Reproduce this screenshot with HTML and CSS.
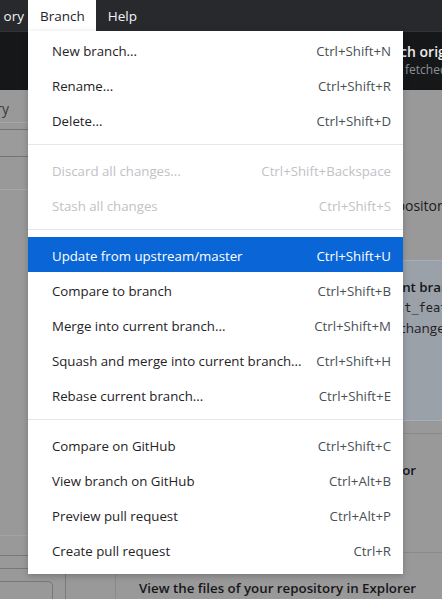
FILE: index.html
```html
<!DOCTYPE html>
<html lang="en">
<head>
<meta charset="utf-8">
<title>Branch menu</title>
<link rel="stylesheet" href="styles.css">
</head>
<body>
<div class="app">
  <div class="menubar">
    <span class="mb-item mb-cut">ory</span>
    <span class="mb-item mb-open">Branch</span>
    <span class="mb-item">Help</span>
  </div>
  <div class="toolbar">
    <div class="tb-seg tb-repo"></div>
    <div class="tb-seg tb-branch"></div>
    <div class="tb-seg tb-fetch">
      <div class="tb-title">Fetch origin</div>
      <div class="tb-sub">Last fetched just now</div>
    </div>
  </div>
  <div class="main">
    <aside class="sidebar">
      <div class="tabs"><span class="tab">History</span></div>
      <div class="filter"><div class="filter-input"></div></div>
      <div class="list"></div>
      <div class="commit">
        <div class="commit-row"></div>
        <div class="summary"></div>
      </div>
    </aside>
    <section class="content">
      <p class="blank-text">No local changes in this repository</p>
      <div class="callout">
        <div class="action-title">Create a Pull Request from your current branch</div>
        <div class="callout-desc">The current branch (<code>bugfix/login_test_feature</code>) is already published to GitHub.</div>
        <div class="callout-desc">Create a pull request to propose your changes.</div>
      </div>
      <div class="actions">
        <div class="action action-editor">
          <div class="action-title">Open the repository in your external editor</div>
        </div>
        <div class="action action-files">
          <div class="action-title">View the files of your repository in Explorer</div>
        </div>
      </div>
    </section>
  </div>
</div>

<div class="menu">
  <div class="mi"><span>New branch...</span><span class="sc">Ctrl+Shift+N</span></div>
  <div class="mi"><span>Rename...</span><span class="sc">Ctrl+Shift+R</span></div>
  <div class="mi"><span>Delete...</span><span class="sc">Ctrl+Shift+D</span></div>
  <div class="sep"></div>
  <div class="mi dis"><span>Discard all changes...</span><span class="sc">Ctrl+Shift+Backspace</span></div>
  <div class="mi dis"><span>Stash all changes</span><span class="sc">Ctrl+Shift+S</span></div>
  <div class="sep"></div>
  <div class="mi hl"><span>Update from upstream/master</span><span class="sc">Ctrl+Shift+U</span></div>
  <div class="mi"><span>Compare to branch</span><span class="sc">Ctrl+Shift+B</span></div>
  <div class="mi"><span>Merge into current branch...</span><span class="sc">Ctrl+Shift+M</span></div>
  <div class="mi"><span>Squash and merge into current branch...</span><span class="sc">Ctrl+Shift+H</span></div>
  <div class="mi"><span>Rebase current branch...</span><span class="sc">Ctrl+Shift+E</span></div>
  <div class="sep"></div>
  <div class="mi"><span>Compare on GitHub</span><span class="sc">Ctrl+Shift+C</span></div>
  <div class="mi"><span>View branch on GitHub</span><span class="sc">Ctrl+Alt+B</span></div>
  <div class="mi"><span>Preview pull request</span><span class="sc">Ctrl+Alt+P</span></div>
  <div class="mi"><span>Create pull request</span><span class="sc">Ctrl+R</span></div>
</div>
</body>
</html>
```

FILE: styles.css
```css
* { box-sizing: border-box; margin: 0; padding: 0; }

html, body {
  width: 442px;
  height: 599px;
  overflow: hidden;
}

body {
  position: relative;
  font-family: "Open Sans", "Noto Sans", sans-serif;
  background: #999999;
  color: #1b1c1e;
}

.app {
  width: 442px;
  height: 599px;
  display: flex;
  flex-direction: column;
}

/* top menu bar */
.menubar {
  height: 31px;
  flex: none;
  display: flex;
  background: #27292d;
  color: #f4f4f4;
  font-size: 13.5px;
}

.mb-item {
  display: flex;
  align-items: center;
  padding: 0 11px 0 12px;
  white-space: nowrap;
}

.mb-cut {
  width: 28px;
  justify-content: flex-end;
  padding: 0 4px 0 0;
}

.mb-open {
  background: #ffffff;
  color: #1f2327;
}

/* dimmed toolbar */
.toolbar {
  height: 59px;
  flex: none;
  display: flex;
  background: #151719;
  border-top: 1px solid #303337;
}

.tb-seg {
  border-right: 1px solid #0e0f11;
}

.tb-repo { width: 200px; flex: none; }
.tb-branch { width: 141px; flex: none; }

.tb-fetch {
  padding: 10px 0 0 38px;
  white-space: nowrap;
}

.tb-title {
  font-size: 14px;
  font-weight: 600;
  line-height: 20px;
  color: #ececec;
}

.tb-sub {
  font-size: 12px;
  line-height: 16px;
  color: #8d9094;
}

/* main dimmed area */
.main {
  flex: 1;
  display: flex;
  min-height: 0;
}

.sidebar {
  width: 66px;
  flex: none;
  display: flex;
  flex-direction: column;
  border-right: 1px solid #7b7b7b;
}

.tabs {
  height: 33px;
  flex: none;
  display: flex;
  align-items: center;
  border-bottom: 1px solid #a6a6a6;
}

.tab {
  width: 9px;
  overflow: hidden;
  direction: rtl;
  white-space: nowrap;
  font-size: 14px;
  color: #3a3b3d;
  padding-top: 4px;
}

.filter {
  height: 67px;
  flex: none;
  padding-top: 6px;
  border-bottom: 1px solid #a6a6a6;
}

.filter-input {
  height: 28px;
  border-top: 1px solid #747474;
  border-bottom: 1px solid #747474;
  background: #9b9b9b;
}

.list { flex: 1; }

.commit {
  height: 64px;
  flex: none;
  border-top: 1px solid #a3a3a3;
  padding-top: 19px;
}

.commit-row {
  height: 14px;
  border-top: 1px solid #777777;
  border-bottom: 1px solid #777777;
}

.summary {
  margin: 12px 12px 0 0;
  height: 40px;
  border: 1px solid #777777;
  border-left: none;
  border-radius: 0 5px 5px 0;
}

.content {
  flex: 1;
  padding-top: 106px;
  min-width: 0;
  white-space: nowrap;
}

.blank-text {
  font-size: 14px;
  line-height: 20px;
  padding-left: 160px;
  color: #1b1c1e;
}

.callout {
  margin: 44px 0 0 49px;
  height: 161px;
  background: #9ba1a9;
  border: 1px solid #a3afbf;
  border-right: none;
  padding: 16px 0 0 44px;
}

.action-title {
  font-size: 13.3px;
  font-weight: 600;
  line-height: 20px;
  color: #16171a;
}

.callout-desc {
  font-size: 13.5px;
  line-height: 20px;
  color: #1f2022;
}

.callout-desc code {
  font-family: "DejaVu Sans Mono", "Liberation Mono", monospace;
  font-size: 12px;
}

.actions {
  margin: 12px 0 0 49px;
  border: 1px solid #8a8a8a;
  border-right: none;
  border-bottom: none;
}

.action {
  padding-left: 23px;
}

.action-editor {
  height: 119px;
  padding-top: 26px;
  border-bottom: 1px solid #8a8a8a;
}

.action-files {
  padding-top: 25px;
  height: 60px;
}

/* dropdown menu */
.menu {
  position: absolute;
  left: 28px;
  top: 31px;
  width: 375px;
  background: #ffffff;
  padding: 1px 0 7px;
  box-shadow: 0 2px 6px rgba(0, 0, 0, 0.22);
  font-size: 13.25px;
}

.mi {
  height: 35px;
  display: flex;
  justify-content: space-between;
  align-items: center;
  padding: 2px 12px 0 24px;
  color: #1f2327;
  white-space: nowrap;
}

.sc { color: #4a4f55; }

.mi.dis, .mi.dis .sc { color: #bfc2c6; }

.mi.hl { background: #0a66d7; color: #ffffff; }
.mi.hl .sc { color: #ffffff; }

.sep {
  height: 1px;
  margin: 7px 0;
  background: #e4e6e9;
}
```
